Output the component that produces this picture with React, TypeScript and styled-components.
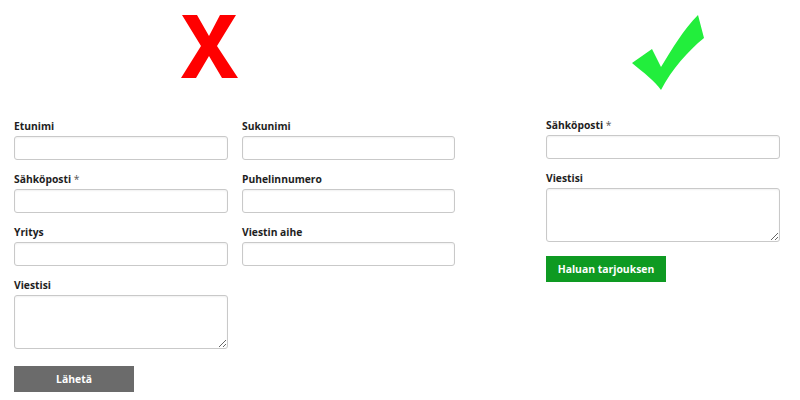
import React from "react";
import styled, { createGlobalStyle } from "styled-components";

const Global = createGlobalStyle`
  html, body { margin: 0; padding: 0; background: #fff; }
  body { font-family: "Open Sans", "Liberation Sans", Arial, sans-serif; }
  * { box-sizing: border-box; }
`;

const Page = styled.div`
  display: flex;
  width: 800px;
  height: 400px;
  background: #fff;
  overflow: hidden;
`;

const Panel = styled.div<{ $left: number; $width: number }>`
  display: flex;
  flex-direction: column;
  margin-left: ${(p) => p.$left}px;
  width: ${(p) => p.$width}px;
`;

const IconRow = styled.div<{ $offset: number; $top: number }>`
  height: 119px;
  padding-left: ${(p) => p.$offset}px;
  padding-top: ${(p) => p.$top}px;
`;

const Grid = styled.div`
  display: grid;
  grid-template-columns: 214px 213px;
  column-gap: 14px;
  row-gap: 12px;
`;

const Stack = styled.div<{ $shift: number }>`
  display: flex;
  flex-direction: column;
  gap: 12px;
  margin-top: ${(p) => p.$shift}px;
`;

const Field = styled.div`
  display: flex;
  flex-direction: column;
`;

const Label = styled.label`
  font-size: 10.3px;
  font-weight: 700;
  line-height: 14px;
  color: #1e1e1e;
  margin-bottom: 3px;
`;

const Star = styled.span`
  color: #555;
  font-weight: 400;
`;

const Input = styled.input`
  height: 24px;
  width: 100%;
  border: 1px solid #c9c9c9;
  border-radius: 3px;
  box-shadow: inset 0 1px 2px rgba(0, 0, 0, 0.06);
  background: #fff;
  outline: none;
`;

const Area = styled.textarea`
  height: 54px;
  width: 100%;
  border: 1px solid #c9c9c9;
  border-radius: 3px;
  box-shadow: inset 0 1px 2px rgba(0, 0, 0, 0.06);
  background: #fff;
  outline: none;
  resize: vertical;
`;

const Button = styled.button<{ $bg: string; $top: number }>`
  margin-top: ${(p) => p.$top}px;
  width: 120px;
  height: 26px;
  border: none;
  background: ${(p) => p.$bg};
  color: #fff;
  font-family: "Open Sans", "Liberation Sans", Arial, sans-serif;
  font-size: 10.4px;
  font-weight: 700;
  padding: 0;
`;

const Cross = () => (
  <svg width="60" height="66" viewBox="0 0 60 66">
    <polygon
      points="2,1 17,1 29,22 40,1 56,1 37,32 58,64 42,64 29,42 16,64 1,64 21,32"
      fill="#ff0000"
    />
  </svg>
);

const Check = () => (
  <svg width="90" height="90" viewBox="0 0 90 90">
    <path
      d="M12,58 L32,44 L41,62 C52,44 64,24 78,10 L84,33 C68,46 52,64 41,85 C35,76 24,68 12,58 Z"
      fill="#22ee3c"
    />
  </svg>
);

export default function App() {
  return (
    <Page>
      <Global />
      <Panel $left={14} $width={441}>
        <IconRow $offset={166} $top={14}>
          <Cross />
        </IconRow>
        <Grid>
          <Field>
            <Label>Etunimi</Label>
            <Input />
          </Field>
          <Field>
            <Label>Sukunimi</Label>
            <Input />
          </Field>
          <Field>
            <Label>
              Sähköposti <Star>*</Star>
            </Label>
            <Input />
          </Field>
          <Field>
            <Label>Puhelinnumero</Label>
            <Input />
          </Field>
          <Field>
            <Label>Yritys</Label>
            <Input />
          </Field>
          <Field>
            <Label>Viestin aihe</Label>
            <Input />
          </Field>
          <Field>
            <Label>Viestisi</Label>
            <Area />
          </Field>
        </Grid>
        <div>
          <Button $bg="#6b6b6b" $top={17}>Lähetä</Button>
        </div>
      </Panel>
      <Panel $left={91} $width={234}>
        <IconRow $offset={74} $top={5}>
          <Check />
        </IconRow>
        <Stack $shift={-1}>
          <Field>
            <Label>
              Sähköposti <Star>*</Star>
            </Label>
            <Input />
          </Field>
          <Field>
            <Label>Viestisi</Label>
            <Area />
          </Field>
        </Stack>
        <div>
          <Button $bg="#0e9a22" $top={14}>Haluan tarjouksen</Button>
        </div>
      </Panel>
    </Page>
  );
}
